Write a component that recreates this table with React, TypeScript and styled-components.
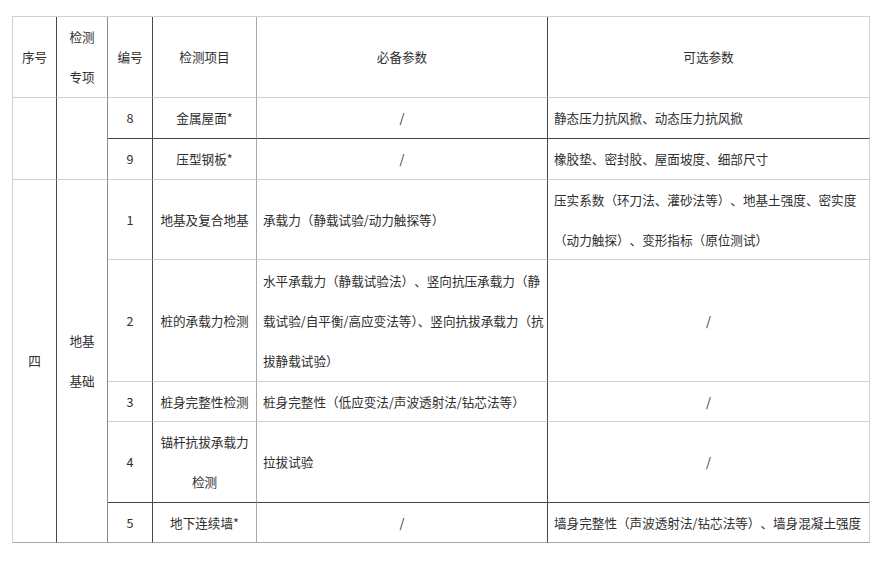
import React from "react";
import styled, { createGlobalStyle } from "styled-components";

const GlobalStyle = createGlobalStyle`
  html, body {
    margin: 0;
    padding: 0;
    background: #ffffff;
  }
  body {
    font-family: "Noto Sans CJK SC", "Noto Sans", "Liberation Sans", sans-serif;
    color: #2e2e2e;
  }
`;

const LINE = {
  dark: "#474747",
  mid: "#8c8c8c",
  gray: "#a8a8a8",
  light: "#d0d0d0",
};

type Tone = keyof typeof LINE;

const Page = styled.div`
  width: 882px;
  height: 561px;
  padding: 16px 0 0 12px;
  box-sizing: border-box;
  background: #ffffff;
`;

const Sheet = styled.div`
  display: grid;
  grid-template-columns: 44px 51px 45px 104px 291px 322px;
  grid-template-rows: 81px 41px 41px 80px 122px 40px 81px 40px;
  width: max-content;
  border-left: 1px solid ${LINE.light};
  border-top: 1px solid ${LINE.light};
  font-size: 12.6px;
  line-height: 40px;
`;

const Cell = styled.div<{
  $left?: boolean;
  $rb: Tone;
  $bb: Tone;
  $span?: number;
}>`
  box-sizing: border-box;
  display: flex;
  align-items: center;
  justify-content: ${(p) => (p.$left ? "flex-start" : "center")};
  text-align: ${(p) => (p.$left ? "left" : "center")};
  padding: 0 6px;
  border-right: 1px solid ${(p) => LINE[p.$rb]};
  border-bottom: 1px solid ${(p) => LINE[p.$bb]};
  grid-row: span ${(p) => p.$span ?? 1};
  white-space: nowrap;
  overflow: visible;
`;

const Lines = styled.div`
  display: flex;
  flex-direction: column;
`;

const Line = styled.span<{ $tight?: boolean }>`
  text-spacing-trim: ${(p) => (p.$tight ? "normal" : "space-all")};
`;

const RIGHT: Tone[] = ["dark", "mid", "dark", "gray", "dark", "light"];

type TextLine = string | { text: string; tight: boolean };

type Row = {
  bottom: Tone;
  no: string;
  item: TextLine[];
  must: TextLine[];
  mustLeft?: boolean;
  opt: TextLine[];
  optLeft?: boolean;
};

const rowsA: Row[] = [
  {
    bottom: "dark",
    no: "8",
    item: ["金属屋面*"],
    must: ["/"],
    opt: ["静态压力抗风掀、动态压力抗风掀"],
    optLeft: true,
  },
  {
    bottom: "light",
    no: "9",
    item: ["压型钢板*"],
    must: ["/"],
    opt: ["橡胶垫、密封胶、屋面坡度、细部尺寸"],
    optLeft: true,
  },
];

const rowsB: Row[] = [
  {
    bottom: "light",
    no: "1",
    item: ["地基及复合地基"],
    must: ["承载力（静载试验/动力触探等）"],
    mustLeft: true,
    opt: ["压实系数（环刀法、灌砂法等）、地基土强度、密实度", "（动力触探）、变形指标（原位测试）"],
    optLeft: true,
  },
  {
    bottom: "light",
    no: "2",
    item: ["桩的承载力检测"],
    must: [
      "水平承载力（静载试验法）、竖向抗压承载力（静",
      { text: "载试验/自平衡/高应变法等）、竖向抗拔承载力（抗", tight: true },
      "拔静载试验）",
    ],
    mustLeft: true,
    opt: ["/"],
  },
  {
    bottom: "light",
    no: "3",
    item: ["桩身完整性检测"],
    must: ["桩身完整性（低应变法/声波透射法/钻芯法等）"],
    mustLeft: true,
    opt: ["/"],
  },
  {
    bottom: "dark",
    no: "4",
    item: ["锚杆抗拔承载力", "检测"],
    must: ["拉拔试验"],
    mustLeft: true,
    opt: ["/"],
  },
  {
    bottom: "gray",
    no: "5",
    item: ["地下连续墙*"],
    must: ["/"],
    opt: ["墙身完整性（声波透射法/钻芯法等）、墙身混凝土强度"],
    optLeft: true,
  },
];

const Text = ({ lines }: { lines: TextLine[] }) => (
  <Lines>
    {lines.map((l, i) =>
      typeof l === "string" ? (
        <Line key={i}>{l}</Line>
      ) : (
        <Line key={i} $tight={l.tight}>
          {l.text}
        </Line>
      )
    )}
  </Lines>
);

const DataRow = ({ r }: { r: Row }) => (
  <>
    <Cell $rb={RIGHT[2]} $bb={r.bottom}>
      {r.no}
    </Cell>
    <Cell $rb={RIGHT[3]} $bb={r.bottom}>
      <Text lines={r.item} />
    </Cell>
    <Cell $rb={RIGHT[4]} $bb={r.bottom} $left={r.mustLeft}>
      <Text lines={r.must} />
    </Cell>
    <Cell $rb={RIGHT[5]} $bb={r.bottom} $left={r.optLeft}>
      <Text lines={r.opt} />
    </Cell>
  </>
);

const headers: string[][] = [["序号"], ["检测", "专项"], ["编号"], ["检测项目"], ["必备参数"], ["可选参数"]];

export default function App() {
  return (
    <>
      <GlobalStyle />
      <Page>
        <Sheet>
          {headers.map((h, i) => (
            <Cell key={i} $rb={RIGHT[i]} $bb="light">
              <Text lines={h} />
            </Cell>
          ))}

          <Cell $rb={RIGHT[0]} $bb="light" $span={2} />
          <Cell $rb={RIGHT[1]} $bb="light" $span={2} />
          {rowsA.map((r) => (
            <DataRow key={r.no} r={r} />
          ))}

          <Cell $rb={RIGHT[0]} $bb="gray" $span={5}>
            四
          </Cell>
          <Cell $rb={RIGHT[1]} $bb="gray" $span={5}>
            <Text lines={["地基", "基础"]} />
          </Cell>
          {rowsB.map((r) => (
            <DataRow key={r.no} r={r} />
          ))}
        </Sheet>
      </Page>
    </>
  );
}
